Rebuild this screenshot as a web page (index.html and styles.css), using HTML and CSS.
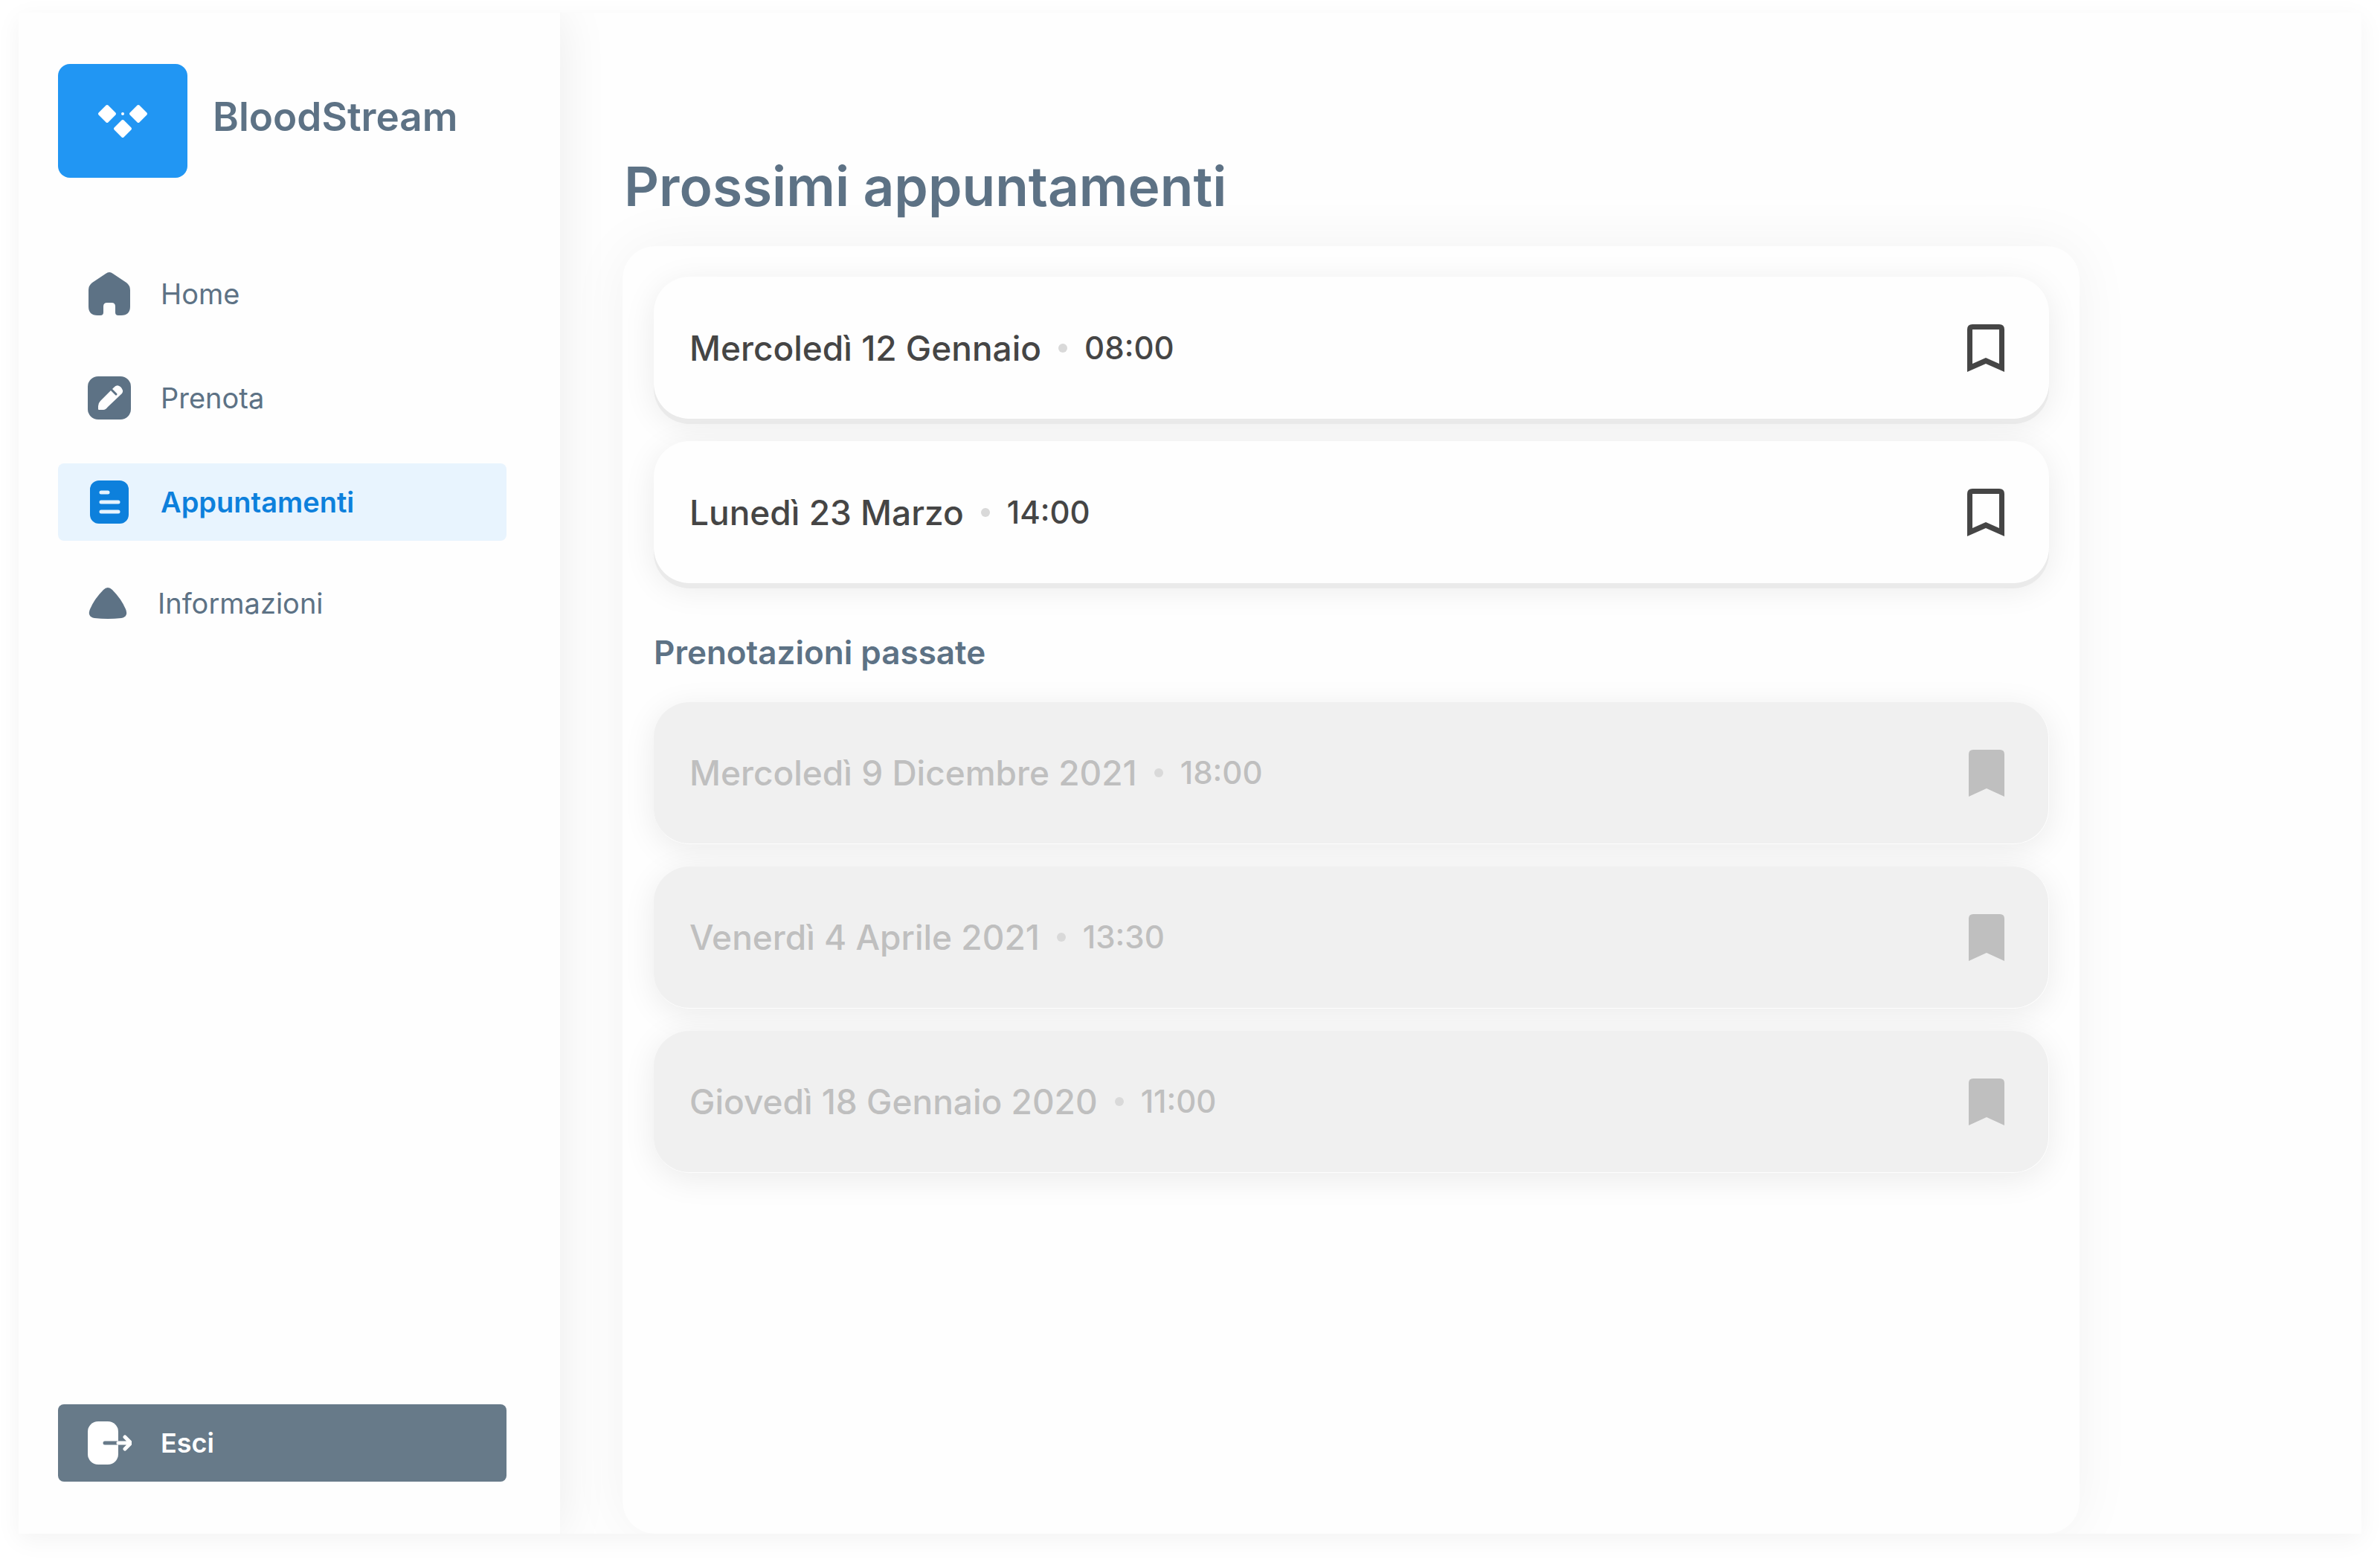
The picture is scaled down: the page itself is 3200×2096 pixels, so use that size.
FILE: index.html
```html
<!DOCTYPE html>
<html lang="it">
<head>
<meta charset="utf-8">
<title>BloodStream – Appuntamenti</title>
<link rel="stylesheet" href="styles.css">
</head>
<body>
<div class="app">
  <aside class="sidebar">
    <div class="brand">
      <svg class="brand-logo" viewBox="0 0 174 153" aria-hidden="true">
        <rect width="174" height="153" rx="16" fill="#2196f3"/>
        <g fill="#fff" stroke="#fff" stroke-width="4" stroke-linejoin="round">
          <path d="M66 57l10 10-10 10-10-10zM108 57l10 10-10 10-10-10zM87 77l10 10-10 10-10-10z"/>
        </g>
        <circle cx="87" cy="67" r="2" fill="#fff"/>
      </svg>
      <span class="brand-name">BloodStream</span>
    </div>
    <nav class="nav">
      <a class="nav-link" href="#home">
        <svg class="icon" viewBox="0 0 60 60" aria-hidden="true"><path fill="currentColor" d="M25 3Q30 -1 35 3L53 15Q58 19 58 25V47Q58 59 46 59H42Q38 59 38 55V47Q38 42 33 42H27Q22 42 22 47V55Q22 59 18 59H14Q2 59 2 47V25Q2 19 7 15Z"/></svg>
        <span>Home</span>
      </a>
      <a class="nav-link" href="#prenota">
        <svg class="icon" viewBox="0 0 60 60" aria-hidden="true"><rect x="1" y="1" width="58" height="58" rx="14" fill="currentColor"/><path fill="#fefefe" d="M15 45V41Q15 37 18 34L36 16Q40 11 45 15Q50 20 47 24L28 42Q25 46 22 46H16Q15 46 15 45Z"/><path d="M31 17l8 8" stroke="currentColor" stroke-width="3" stroke-linecap="round"/></svg>
        <span>Prenota</span>
      </a>
      <a class="nav-link nav-link-active" href="#appuntamenti" aria-current="page">
        <svg class="icon" viewBox="0 0 60 60" aria-hidden="true"><rect x="4" y="1" width="52" height="58" rx="12" fill="currentColor"/><path d="M19 17h9M19 30h23M19 43h23" stroke="#e8f4fe" stroke-width="5" stroke-linecap="round"/></svg>
        <span>Appuntamenti</span>
      </a>
      <a class="nav-link nav-link-info" href="#informazioni">
        <svg class="icon icon-info" viewBox="0 0 56 56" aria-hidden="true"><path fill="currentColor" d="M22 10Q28 4 34 10Q46 22 52 36Q56 46 46 48Q28 50 10 48Q0 46 4 36Q10 22 22 10Z"/></svg>
        <span>Informazioni</span>
      </a>
    </nav>
    <button class="logout" type="button">
      <svg class="icon" viewBox="0 0 60 60" aria-hidden="true"><rect x="1" y="1" width="41" height="58" rx="14" fill="#fff"/><path d="M24 30h18" stroke="#677a89" stroke-width="5" stroke-linecap="round"/><path d="M42 30h16M51 22l8 8-8 8" fill="none" stroke="#fff" stroke-width="5" stroke-linecap="round" stroke-linejoin="round"/></svg>
      <span>Esci</span>
    </button>
  </aside>
  <main class="main">
    <h1 class="title">Prossimi appuntamenti</h1>
    <section class="panel">
      <ul class="cards">
        <li class="card"><span class="date">Mercoledì 12 Gennaio</span><span class="dot"></span><time class="time">08:00</time>
          <button class="bookmark" type="button" aria-label="Segnalibro"><svg viewBox="0 0 50 64" aria-hidden="true"><path fill="currentColor" fill-rule="evenodd" d="M7 0H43Q50 0 50 7V64L25 53L0 64V7Q0 0 7 0ZM7 7V53L25 45L43 53V7Z"/></svg></button></li>
        <li class="card"><span class="date">Lunedì 23 Marzo</span><span class="dot"></span><time class="time">14:00</time>
          <button class="bookmark" type="button" aria-label="Segnalibro"><svg viewBox="0 0 50 64" aria-hidden="true"><path fill="currentColor" fill-rule="evenodd" d="M7 0H43Q50 0 50 7V64L25 53L0 64V7Q0 0 7 0ZM7 7V53L25 45L43 53V7Z"/></svg></button></li>
      </ul>
      <h2 class="subtitle">Prenotazioni passate</h2>
      <ul class="cards">
        <li class="card card-past"><span class="date">Mercoledì 9 Dicembre 2021</span><span class="dot"></span><time class="time">18:00</time>
          <button class="bookmark" type="button" aria-label="Segnalibro"><svg viewBox="0 0 50 64" aria-hidden="true"><path fill="currentColor" d="M8 1H44Q50 1 50 7V64L26 53L2 64V7Q2 1 8 1Z"/></svg></button></li>
        <li class="card card-past"><span class="date">Venerdì 4 Aprile 2021</span><span class="dot"></span><time class="time">13:30</time>
          <button class="bookmark" type="button" aria-label="Segnalibro"><svg viewBox="0 0 50 64" aria-hidden="true"><path fill="currentColor" d="M8 1H44Q50 1 50 7V64L26 53L2 64V7Q2 1 8 1Z"/></svg></button></li>
        <li class="card card-past"><span class="date">Giovedì 18 Gennaio 2020</span><span class="dot"></span><time class="time">11:00</time>
          <button class="bookmark" type="button" aria-label="Segnalibro"><svg viewBox="0 0 50 64" aria-hidden="true"><path fill="currentColor" d="M8 1H44Q50 1 50 7V64L26 53L2 64V7Q2 1 8 1Z"/></svg></button></li>
      </ul>
    </section>
  </main>
</div>
</body>
</html>
```

FILE: styles.css
```css
* {
  box-sizing: border-box;
}

body {
  display: flex;
  min-height: 100vh;
  margin: 0;
  padding: 17px 25px 34px;
  background: #fff;
  color: #5d7285;
  font-family: Inter, "Liberation Sans", sans-serif;
}

.app {
  display: flex;
  flex: 1;
  overflow: hidden;
  background: #fefefe;
  box-shadow: 0 8px 32px rgba(0, 0, 0, 0.05);
}

.sidebar {
  display: flex;
  flex: none;
  flex-direction: column;
  width: 728px;
  padding: 69px 72px 70px 53px;
  background: #fefefe;
  box-shadow: 0 0 64px rgba(0, 0, 0, 0.08);
}

.brand {
  display: flex;
  align-items: center;
  gap: 34px;
}

.brand-logo {
  width: 174px;
  height: 153px;
}

.brand-name {
  padding-bottom: 12px;
  font-size: 53px;
  font-weight: 600;
  line-height: 60px;
}

.nav {
  display: flex;
  flex-direction: column;
  gap: 36px;
  margin-top: 104px;
}

.nav-link,
.logout {
  display: flex;
  align-items: center;
  gap: 39px;
  height: 104px;
  padding: 0 39px;
  border: 0;
  border-radius: 8px;
  color: inherit;
  font-family: inherit;
  font-size: 38px;
  line-height: 44px;
  text-decoration: none;
}

.nav-link-active {
  background: #e8f4fe;
  color: #0d80dc;
  font-weight: 600;
}

.nav-link-info {
  height: 96px;
}

.icon {
  flex: none;
  width: 60px;
  height: 60px;
}

.icon-info {
  width: 56px;
  height: 56px;
}

.logout {
  margin-top: auto;
  background: #677a89;
  color: #fff;
  font-size: 36px;
  font-weight: 600;
}

.main {
  display: flex;
  flex: 1;
  flex-direction: column;
  padding: 190px 379px 0 84px;
}

.title {
  margin: 0 0 36px;
  padding-left: 2px;
  font-size: 73px;
  font-weight: 600;
  line-height: 88px;
}

.panel {
  flex: 1;
  padding: 41px 41px 41px 42px;
  border-radius: 44px;
  background: #fefefe;
  box-shadow: 0 0 80px rgba(0, 0, 0, 0.05);
}

.cards {
  display: flex;
  flex-direction: column;
  gap: 30px;
  margin: 0;
  padding: 0;
  list-style: none;
}

.card {
  display: flex;
  align-items: center;
  gap: 23px;
  height: 191px;
  padding: 0 60px 0 48px;
  border-radius: 48px;
  background: #fefefe;
  box-shadow: 0 7px 0 #eaeaea, 0 8px 44px rgba(0, 0, 0, 0.08);
  color: #454545;
}

.card-past {
  padding-right: 59px;
  border: solid #fdfdfd;
  border-width: 0 1px 1px 0;
  background: #f0f0f0;
  box-shadow: 0 8px 44px rgba(0, 0, 0, 0.08);
  color: #bfbfbf;
}

.date {
  font-size: 46px;
  font-weight: 500;
  line-height: 56px;
}

.dot {
  width: 12px;
  height: 12px;
  border-radius: 50%;
  background: #d9d9d9;
}

.time {
  font-size: 42px;
  font-weight: 500;
  line-height: 52px;
}

.bookmark {
  display: flex;
  width: 50px;
  height: 64px;
  margin-left: auto;
  padding: 0;
  border: 0;
  background: none;
  color: inherit;
}

.subtitle {
  margin: 68px 0 42px;
  font-size: 44px;
  font-weight: 600;
  line-height: 50px;
}
```
